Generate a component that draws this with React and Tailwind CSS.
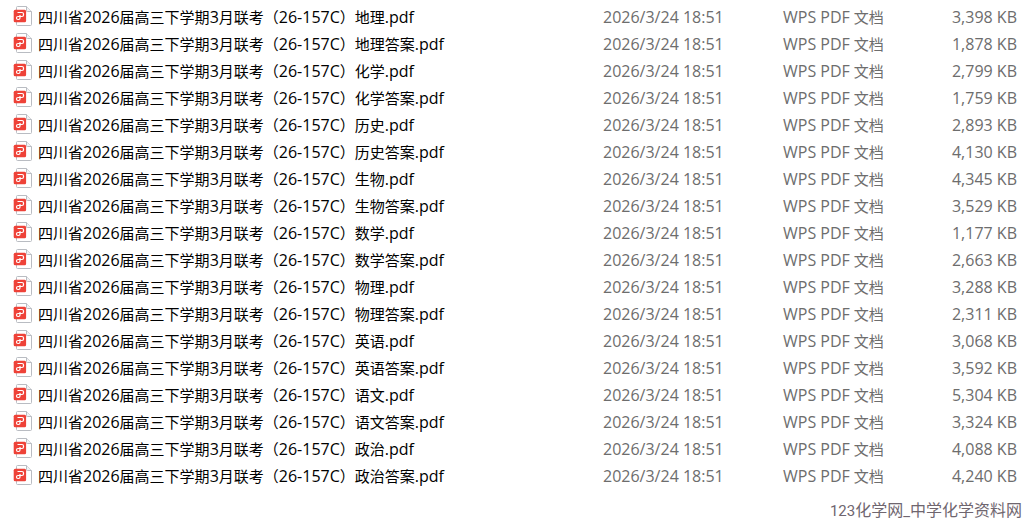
const SUBJECTS = [
  { name: '地理', size: '3,398 KB', answerSize: '1,878 KB' },
  { name: '化学', size: '2,799 KB', answerSize: '1,759 KB' },
  { name: '历史', size: '2,893 KB', answerSize: '4,130 KB' },
  { name: '生物', size: '4,345 KB', answerSize: '3,529 KB' },
  { name: '数学', size: '1,177 KB', answerSize: '2,663 KB' },
  { name: '物理', size: '3,288 KB', answerSize: '2,311 KB' },
  { name: '英语', size: '3,068 KB', answerSize: '3,592 KB' },
  { name: '语文', size: '5,304 KB', answerSize: '3,324 KB' },
  { name: '政治', size: '4,088 KB', answerSize: '4,240 KB' },
]

// Every subject has a paper and an answer key
const FILES = SUBJECTS.flatMap(({ name, size, answerSize }) => [
  { title: name, size },
  { title: `${name}答案`, size: answerSize },
])

function PdfIcon() {
  return (
    <svg className="w-5 h-5 shrink-0" viewBox="0 0 20 20" fill="none" aria-hidden="true">
      {/* Page with folded corner */}
      <path d="M5.5 .5h9l5 5v13a1 1 0 0 1-1 1h-13a1 1 0 0 1-1-1v-17a1 1 0 0 1 1-1z" fill="#fff" stroke="#b9bcc2" />
      <path d="M14.5 .5v4a1 1 0 0 0 1 1h4" fill="#f1f2f4" stroke="#b9bcc2" />
      {/* Red badge */}
      <rect x="1.7" y="3.8" width="12.4" height="12.4" rx="1.5" fill="#ee4238" />
      <path
        d="M5.5 6.5h4.5a1.5 1.5 0 0 1 1.5 1.5v1a1.5 1.5 0 0 1-1.5 1.5h-4a1.5 1.5 0 0 0-1.5 1.5v0a1.5 1.5 0 0 0 1.5 1.5h.5a1.5 1.5 0 0 0 1.5-1.5v-3"
        stroke="#fff"
        strokeWidth="1.2"
      />
    </svg>
  )
}

// Latin runs are set one size up from the Chinese text
function Latin({ children }) {
  return <span className="text-base/none">{children}</span>
}

export default function App() {
  return (
    <main className="bg-white pt-1 text-[15px] font-['Open_Sans','Noto_Sans_CJK_SC',sans-serif]">
      <table className="w-full table-fixed whitespace-nowrap">
        <colgroup>
          <col />
          <col className="w-[180px]" />
          <col className="w-[120px]" />
          <col className="w-[126px]" />
        </colgroup>
        <tbody>
          {FILES.map((file) => (
            <tr key={file.title} className="h-[27px] leading-[27px] text-[#6d6d6d]">
              <td className="p-0 pl-3">
                <div className="flex items-start gap-1.5 h-[27px] text-black">
                  <span className="pt-0.5"><PdfIcon /></span>
                  <span>
                    四川省<Latin>2026</Latin>届高三下学期<Latin>3</Latin>月联考（<Latin>26-157C</Latin>）{file.title}
                    <Latin>.pdf</Latin>
                  </span>
                </div>
              </td>
              <td className="p-0"><Latin>2026/3/24 18:51</Latin></td>
              <td className="p-0"><Latin>WPS PDF</Latin> 文档</td>
              <td className="p-0 pr-3 text-right"><Latin>{file.size}</Latin></td>
            </tr>
          ))}
        </tbody>
      </table>
      <footer className="pt-2 pr-[7px] text-right leading-6 text-[#6f666f]">
        <span className="font-['Roboto',sans-serif]">123</span>
        <span className="text-base">化学网</span>
        <span className="font-['Roboto',sans-serif]">_</span>
        <span className="text-base">中学化学资料网</span>
      </footer>
    </main>
  )
}
